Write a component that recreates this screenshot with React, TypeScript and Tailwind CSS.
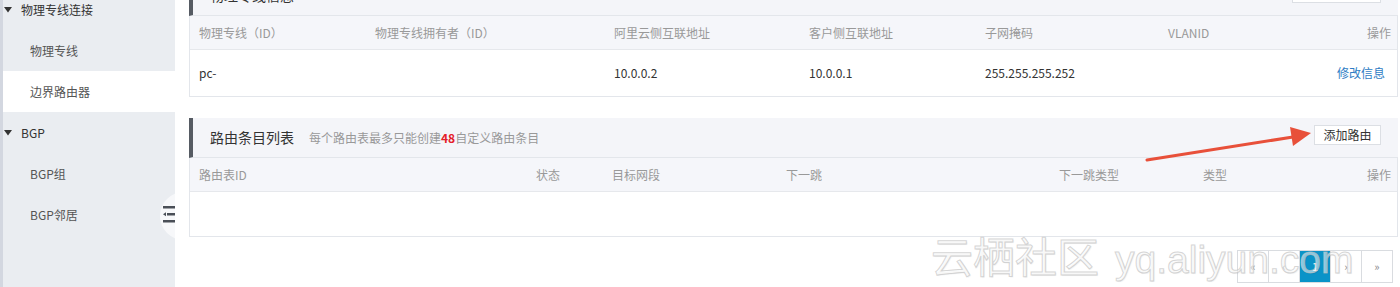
import React from "react";

const font = "font-['Microsoft_YaHei','Noto_Sans_CJK_SC','Noto_Sans',sans-serif]";

function Tri() {
  return (
    <svg width="8" height="6" viewBox="0 0 8 6" className="absolute left-[1px] top-1/2 -translate-y-1/2">
      <polygon points="0,0 8,0 4,5.5" fill="#333" />
    </svg>
  );
}

function Sidebar() {
  const row = "h-[41px] flex items-center text-[12px]";
  return (
    <aside className="relative w-[175px] shrink-0 h-full bg-[#eaedf1] border-l-[3px] border-[#d3d7e0]">
      <div className="mt-[-11px]">
        <div className={`${row} relative pl-[18px] text-[#333]`}>
          <Tri />
          物理专线连接
        </div>
        <div className={`${row} pl-[27px] text-[#555]`}>物理专线</div>
        <div className={`${row} pl-[27px] text-[#555] bg-white`}>边界路由器</div>
        <div className={`${row} relative pl-[18px] text-[#333]`}>
          <Tri />
          BGP
        </div>
        <div className={`${row} pl-[27px] text-[#555]`}>BGP组</div>
        <div className={`${row} pl-[27px] text-[#555]`}>BGP邻居</div>
      </div>
      <div className="absolute right-0 top-[192px] w-[15px] h-[48px] overflow-hidden">
        <div className="w-[48px] h-[48px] rounded-full bg-[#f7f8fa]" />
        <svg width="12" height="17" viewBox="0 0 12 17" className="absolute left-[3px] top-[14px]">
          <rect x="0" y="0" width="12" height="2.5" fill="#4a4f57" />
          <rect x="4" y="7" width="8" height="2.5" fill="#4a4f57" />
          <polygon points="0,8.25 3,6.3 3,10.2" fill="#4a4f57" />
          <rect x="0" y="14" width="12" height="2.5" fill="#4a4f57" />
        </svg>
      </div>
    </aside>
  );
}

function PanelHeader({ children, btn, btnW }: { children: React.ReactNode; btn: string; btnW: string }) {
  return (
    <div className="h-[40px] flex bg-[#f4f5f9] border-l-[4px] border-l-[#565b63] border-b border-b-[#e3e6eb] pl-[17px] pr-[17px]">
      <div className="flex items-center flex-1">{children}</div>
      <button className={`mt-[7px] h-[20px] ${btnW} bg-white border border-[#dcdfe4] text-[12px] text-[#333] leading-none`}>{btn}</button>
    </div>
  );
}

function Pager() {
  const b = "w-[32px] h-[33px] flex items-center justify-center text-[11px] text-[#888] border border-[#d9dce0] -ml-px first:ml-0";
  return (
    <div className="flex justify-end mt-[13px] mr-[5px]">
      <div className={b}>«</div>
      <div className={b}>‹</div>
      <div className={`${b} bg-[#0a93c8] border-[#0a93c8] text-white`}>1</div>
      <div className={b}>›</div>
      <div className={b}>»</div>
    </div>
  );
}

export default function App() {
  const th = "h-[34px] flex items-center text-[12px] text-[#999] bg-[#f5f6fa] border-b border-[#e6e8ec]";
  return (
    <div className={`relative flex w-[1400px] h-[287px] overflow-hidden bg-white ${font}`}>
      <Sidebar />
      <main className="ml-[14px] w-[1209px] mt-[-24px]">
        {/* Panel 1 */}
        <div>
          <PanelHeader btn="" btnW="w-[89px]">
            <span className="text-[14px] text-[#333]">物理专线信息</span>
          </PanelHeader>
          <div className="border-x border-b border-[#e3e6eb]">
            <div className={`${th} grid grid-cols-[176px_239px_195px_176px_183px_1fr] pl-[9px] pr-[6px]`}>
              <span>物理专线（ID）</span>
              <span>物理专线拥有者（ID）</span>
              <span>阿里云侧互联地址</span>
              <span>客户侧互联地址</span>
              <span>子网掩码</span>
              <span className="flex justify-between"><span>VLANID</span><span>操作</span></span>
            </div>
            <div className="h-[46px] grid grid-cols-[176px_239px_195px_176px_183px_1fr] items-center pl-[9px] pr-[12px] text-[12px] text-[#333]">
              <span>pc-</span>
              <span></span>
              <span>10.0.0.2</span>
              <span>10.0.0.1</span>
              <span>255.255.255.252</span>
              <span className="text-right text-[#2e7cc4]">修改信息</span>
            </div>
          </div>
        </div>

        {/* Panel 2 */}
        <div className="mt-[21px]">
          <PanelHeader btn="添加路由" btnW="w-[67px]">
            <span className="text-[14px] text-[#333]">路由条目列表</span>
            <span className="ml-[15px] text-[12px] text-[#999]">
              每个路由表最多只能创建<span className="text-[#e4202a] font-bold">48</span>自定义路由条目
            </span>
          </PanelHeader>
          <div className="border-x border-b border-[#e3e6eb]">
            <div className={`${th} grid grid-cols-[337px_76px_174px_273px_144px_1fr] pl-[9px] pr-[6px]`}>
              <span>路由表ID</span>
              <span>状态</span>
              <span>目标网段</span>
              <span>下一跳</span>
              <span>下一跳类型</span>
              <span className="flex justify-between"><span>类型</span><span>操作</span></span>
            </div>
            <div className="h-[44px]" />
          </div>
          <Pager />
        </div>
      </main>

      {/* watermark */}
      <div className="absolute left-[931px] top-[234px] leading-none whitespace-nowrap text-[rgba(255,255,255,0.55)] [-webkit-text-stroke:1px_rgba(190,190,190,0.65)] [text-shadow:1px_1px_1px_rgba(0,0,0,0.06)] pointer-events-none flex items-baseline">
        <span className="text-[42px] font-['Noto_Sans_CJK_SC',sans-serif]">云栖社区</span>
        <span className="ml-[16px] text-[39px] font-['Liberation_Sans',sans-serif]">yq.aliyun.com</span>
      </div>

      {/* red arrow annotation */}
      <svg className="absolute left-0 top-0 pointer-events-none" width="1400" height="287" viewBox="0 0 1400 287">
        <line x1="1147" y1="160" x2="1293" y2="137" stroke="#e8503a" strokeWidth="3" strokeLinecap="round" />
        <polygon points="1311,133 1290,127 1293,146" fill="#e8503a" />
      </svg>
    </div>
  );
}
